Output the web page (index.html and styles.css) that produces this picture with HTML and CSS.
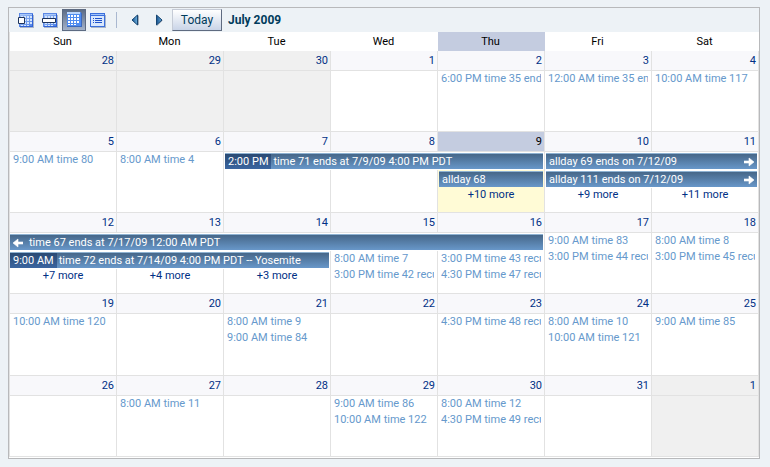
FILE: index.html
```
<!DOCTYPE html>
<html lang="en">
<head>
<meta charset="utf-8">
<title>Calendar - July 2009</title>
<link rel="stylesheet" href="styles.css">
</head>
<body>
<svg class="defs" aria-hidden="true">
  <defs>
    <linearGradient id="face" x1="0" y1="0" x2="1" y2="1">
      <stop offset="0" stop-color="#a9c8f8"/><stop offset="1" stop-color="#4a7ee4"/>
    </linearGradient>
    <linearGradient id="arrow" x1="0" y1="0" x2="1" y2="0">
      <stop offset="0" stop-color="#15508c"/><stop offset="1" stop-color="#6fb2e0"/>
    </linearGradient>
    <g id="cal" shape-rendering="crispEdges">
      <path d="M2 16h14V3h-1v12H2z" fill="#a9b6ca"/>
      <path d="M1 1h14v14H1z" fill="url(#face)"/>
      <path d="M1 1h14v1H1zM1 2h1v13H1z" fill="#5c88e4"/>
      <path d="M2 2h12v1H2z" fill="#a9c8f8"/>
      <path d="M14 2h1v13h-1zM2 14h12v1H2z" fill="#2f62d8"/>
      <path d="M3 4h2v2H3zM6 4h2v2H6zM9 4h2v2H9zM12 4h2v2h-2zM3 7h2v2H3zM6 7h2v2H6zM9 7h2v2H9zM12 7h2v2h-2zM3 10h2v2H3zM6 10h2v2H6zM9 10h2v2H9zM12 10h2v2h-2zM3 13h2v1H3zM6 13h2v1H6zM9 13h2v1H9z" fill="#d3e4fd"/>
    </g>
  </defs>
</svg>
<main class="calendar">
  <header class="toolbar">
    <button class="tool" type="button" aria-label="Day"><svg width="16" height="16"><use href="#cal"/><path d="M.5 5.500h6v6h-6z" fill="#fff" stroke="#1c335c"/></svg></button>
    <button class="tool" type="button" aria-label="Week"><svg width="16" height="16"><use href="#cal"/><path d="M.5 6.500h13v4H.5z" fill="#fff" stroke="#1c335c"/></svg></button>
    <button class="tool selected" type="button" aria-label="Month" aria-pressed="true"><svg width="16" height="16" shape-rendering="crispEdges"><path d="M1 0h14v14H1z" fill="#4f8cf0"/><path d="M1 0h13v2H1z" fill="#b9d5fc"/><path d="M2 3h2v2H2zM5 3h2v2H5zM8 3h2v2H8zM11 3h2v2h-2zM2 6h2v2H2zM5 6h2v2H5zM8 6h2v2H8zM11 6h2v2h-2zM2 9h2v2H2zM5 9h2v2H5zM8 9h2v2H8zM11 9h2v2h-2zM2 12h2v1H2zM5 12h2v1H5zM8 12h2v1H8z" fill="#fff"/><path d="M1 14h14V1h1v14H1z" fill="#3c69bd"/></svg></button>
    <button class="tool" type="button" aria-label="List"><svg width="16" height="16" shape-rendering="crispEdges"><path d="M1 15h14V3h1v13H1z" fill="#a9b6ca"/><path d="M0 1h15v14H0z" fill="#3b6fdc"/><path d="M1 2h13v1H1z" fill="#9fc3fa"/><path d="M1 4h13v10H1z" fill="#d8e7fd"/><path d="M3 6h1v1H3zM5 6h7v1H5zM3 8h1v1H3zM5 8h7v1H5zM3 10h1v1H3zM5 10h7v1H5z" fill="#1f52ca"/></svg></button>
    <span class="separator"></span>
    <button class="tool" type="button" aria-label="Previous month"><svg width="10" height="12"><path d="M8 1v10h1V2z" fill="#a3adba"/><path d="M7.500 1v10L2 6z" fill="url(#arrow)" stroke="#174672"/></svg></button>
    <button class="tool" type="button" aria-label="Next month"><svg width="10" height="12"><path d="M3 11.500L8.500 6.500" stroke="#a3adba"/><path d="M2.500 1v10L8 6z" fill="url(#arrow)" stroke="#174672"/></svg></button>
    <button class="today-button" type="button">Today</button>
    <h1 class="title">July 2009</h1>
  </header>
  <table class="month">
    <thead>
      <tr class="weekdays"><th>Sun</th><th>Mon</th><th>Tue</th><th>Wed</th><th class="today">Thu</th><th>Fri</th><th>Sat</th></tr>
    </thead>
    <tbody>
      <tr class="dates"><th class="other">28</th><th class="other">29</th><th class="other">30</th><th>1</th><th>2</th><th>3</th><th>4</th></tr>
      <tr class="body">
        <td class="other"></td><td class="other"></td><td class="other"></td><td></td>
        <td><a class="event" href="#">6:00 PM time 35 end</a></td>
        <td><a class="event" href="#">12:00 AM time 35 en</a></td>
        <td><a class="event" href="#">10:00 AM time 117</a></td>
      </tr>
    </tbody>
    <tbody>
      <tr class="dates"><th>5</th><th>6</th><th>7</th><th>8</th><th class="today">9</th><th>10</th><th>11</th></tr>
      <tr class="lane">
        <td class="end" rowspan="3"><a class="event" href="#">9:00 AM time 80</a></td>
        <td class="end" rowspan="3"><a class="event" href="#">8:00 AM time 4</a></td>
        <td colspan="3"><a class="bar" href="#"><span class="start">2:00 PM</span><span class="label">time 71 ends at 7/9/09 4:00 PM PDT</span></a></td>
        <td colspan="2"><a class="bar" href="#"><span class="label">allday 69 ends on 7/12/09</span><svg class="next" width="10" height="10"><path d="M0 4h5V1l5 4-5 4V6H0z" fill="#fff" stroke="#fff" stroke-width=".6"/></svg></a></td>
      </tr>
      <tr class="lane">
        <td class="end" rowspan="2"></td><td class="end" rowspan="2"></td>
        <td class="current"><a class="bar" href="#"><span class="label">allday 68</span></a></td>
        <td colspan="2"><a class="bar" href="#"><span class="label">allday 111 ends on 7/12/09</span><svg class="next" width="10" height="10"><path d="M0 4h5V1l5 4-5 4V6H0z" fill="#fff" stroke="#fff" stroke-width=".6"/></svg></a></td>
      </tr>
      <tr class="rest"><td class="current"><a class="more" href="#">+10 more</a></td><td><a class="more" href="#">+9 more</a></td><td><a class="more" href="#">+11 more</a></td></tr>
    </tbody>
    <tbody>
      <tr class="dates"><th>12</th><th>13</th><th>14</th><th>15</th><th>16</th><th>17</th><th>18</th></tr>
      <tr class="lane">
        <td colspan="5"><a class="bar" href="#"><svg class="previous" width="10" height="10"><path d="M10 4H5V1L0 5l5 4V6h5z" fill="#fff" stroke="#fff" stroke-width=".6"/></svg><span class="label">time 67 ends at 7/17/09 12:00 AM PDT</span></a></td>
        <td class="end" rowspan="3"><a class="event" href="#">9:00 AM time 83</a><a class="event" href="#">3:00 PM time 44 recu</a></td>
        <td class="end" rowspan="3"><a class="event" href="#">8:00 AM time 8</a><a class="event" href="#">3:00 PM time 45 recu</a></td>
      </tr>
      <tr class="lane">
        <td colspan="3"><a class="bar" href="#"><span class="start">9:00 AM</span><span class="label">time 72 ends at 7/14/09 4:00 PM PDT -- Yosemite</span></a></td>
        <td class="end" rowspan="2"><a class="event" href="#">8:00 AM time 7</a><a class="event" href="#">3:00 PM time 42 recu</a></td>
        <td class="end" rowspan="2"><a class="event" href="#">3:00 PM time 43 recu</a><a class="event" href="#">4:30 PM time 47 recu</a></td>
      </tr>
      <tr class="rest"><td><a class="more" href="#">+7 more</a></td><td><a class="more" href="#">+4 more</a></td><td><a class="more" href="#">+3 more</a></td></tr>
    </tbody>
    <tbody>
      <tr class="dates"><th>19</th><th>20</th><th>21</th><th>22</th><th>23</th><th>24</th><th>25</th></tr>
      <tr class="body">
        <td><a class="event" href="#">10:00 AM time 120</a></td><td></td>
        <td><a class="event" href="#">8:00 AM time 9</a><a class="event" href="#">9:00 AM time 84</a></td><td></td>
        <td><a class="event" href="#">4:30 PM time 48 recu</a></td>
        <td><a class="event" href="#">8:00 AM time 10</a><a class="event" href="#">10:00 AM time 121</a></td>
        <td><a class="event" href="#">9:00 AM time 85</a></td>
      </tr>
    </tbody>
    <tbody>
      <tr class="dates"><th>26</th><th>27</th><th>28</th><th>29</th><th>30</th><th>31</th><th class="other">1</th></tr>
      <tr class="body">
        <td></td><td><a class="event" href="#">8:00 AM time 11</a></td><td></td>
        <td><a class="event" href="#">9:00 AM time 86</a><a class="event" href="#">10:00 AM time 122</a></td>
        <td><a class="event" href="#">8:00 AM time 12</a><a class="event" href="#">4:30 PM time 49 recu</a></td>
        <td></td><td class="other"></td>
      </tr>
    </tbody>
  </table>
</main>
</body>
</html>
```

FILE: styles.css
```
* { box-sizing: border-box; }

body {
  margin: 7px 10px 8px 8px;
  background: #edf2f6;
  font: 11px/16px Roboto, "Liberation Sans", sans-serif;
  font-variant-ligatures: none;
  color: #000;
}

a { text-decoration: none; }
.defs { display: block; width: 0; height: 0; }

.calendar {
  display: flex;
  flex-direction: column;
  min-height: calc(100vh - 15px);
  background: #fff;
  border: 1px solid #b8b9bb;
}

/* Toolbar */
.toolbar {
  display: flex;
  align-items: center;
  height: 24px;
  padding: 0 5px;
  background: #edf2f6;
}

.tool {
  display: flex;
  align-items: center;
  justify-content: center;
  width: 24px;
  height: 22px;
  padding: 0;
  border: 0;
  background: none;
}

.tool.selected {
  background: linear-gradient(#5b6c86, #a3b2c9);
  border: 1px solid #5d6b82;
}

.separator {
  width: 1px;
  height: 16px;
  margin: 0 6px;
  background: #a9b8d0;
}

.today-button {
  width: 50px;
  height: 22px;
  margin-left: 1px;
  padding: 0;
  border: 1px solid #c5cbd6;
  border-right: 1px solid #5f6b80;
  border-bottom: 1px solid #5f6b80;
  background: linear-gradient(#fff, #c9d4e7);
  color: #003b5c;
  font: 12px/16px Roboto, "Liberation Sans", sans-serif;
}

.title {
  margin: 0 0 0 6px;
  color: #003b5c;
  font-size: 12px;
  line-height: 16px;
}

/* Month grid */
.month {
  width: 100%;
  table-layout: fixed;
  border-spacing: 0;
  border-left: 1px solid #e2e2e2;
}

th, td {
  padding: 0;
  border-right: 1px solid #e2e2e2;
  font-weight: normal;
  vertical-align: top;
}

.weekdays th {
  height: 19px;
  padding-right: 2px;
  border-right: 0;
  vertical-align: middle;
}

.weekdays .today, .dates .today { background: #c4cce0; }

.dates th {
  height: 20px;
  padding-right: 2px;
  background: #f8f8fb;
  border-bottom: 1px solid #e2e2e2;
  color: #003085;
  text-align: right;
  vertical-align: middle;
}

.dates .today { color: #000; }
.dates .other, .body .other { background: #f0f0f0; }
.body td { height: 61px; }
tbody:nth-last-child(2) .body td { height: 62px; }
.body td, .rest td, .end { border-bottom: 1px solid #e2e2e2; }
.lane td { height: 18px; }
.rest td { height: 25px; }
.current { background: #fffbd6; }

/* Events */
.event {
  display: block;
  margin: 0 3px;
  overflow: hidden;
  color: #6699cc;
  white-space: nowrap;
}

.bar {
  display: flex;
  align-items: center;
  height: 16px;
  margin: 1px;
  overflow: hidden;
  background: linear-gradient(#466789, #6897c9);
  border-top: 1px solid #8eb2d2;
  color: #fff;
  white-space: nowrap;
}

td:first-child > .bar { margin-left: 0; }
td.current > .bar, .end ~ td > .bar { margin-left: 1px; }

.start {
  padding: 0 3px;
  background: linear-gradient(#2a4a73, #3c67a3);
}

.label { padding: 0 3px; }
.start + .label { padding-left: 2px; }
.previous { margin: 0 3px; }
.next { margin: 0 3px 0 auto; }

.more {
  display: block;
  color: #003085;
  line-height: 13px;
  text-align: center;
}
```
